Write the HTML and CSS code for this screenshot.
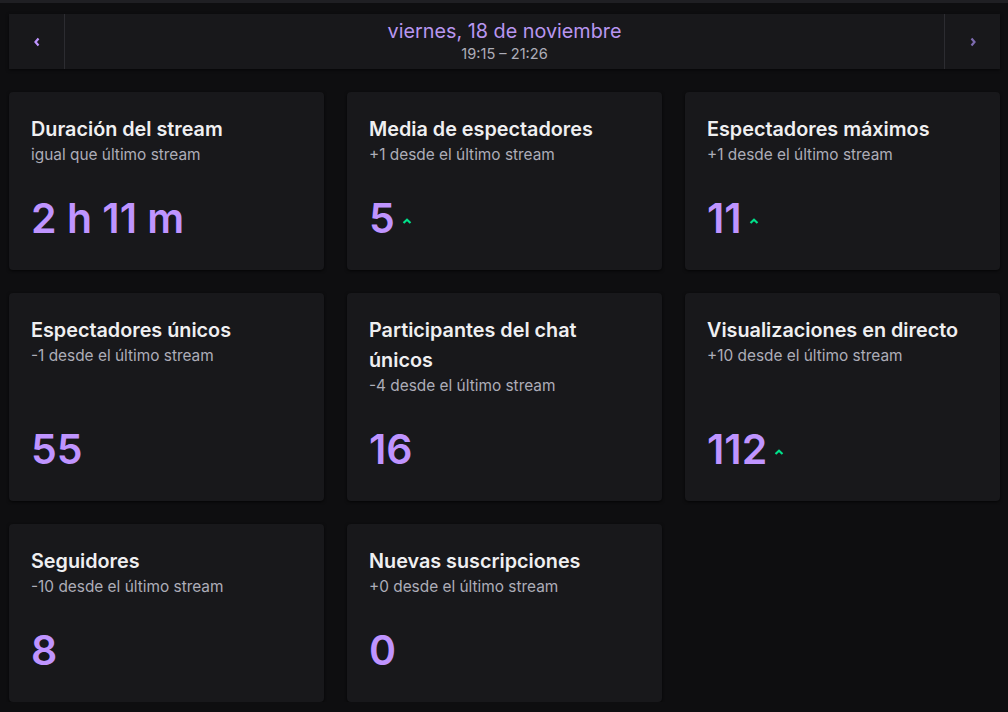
FILE: index.html
```html
<!DOCTYPE html>
<html lang="es">
<head>
<meta charset="utf-8">
<title>Resumen del stream</title>
<link rel="stylesheet" href="styles.css">
</head>
<body>
<div class="topstrip"></div>
<main class="page">
  <header class="datebar">
    <button class="nav nav-prev" aria-label="Anterior">
      <svg width="8" height="10" viewBox="0 0 8 10"><path d="M5.5 1.5 L2.5 5 L5.5 8.5" fill="none" stroke="currentColor" stroke-width="2.2" stroke-linejoin="miter"/></svg>
    </button>
    <div class="date">
      <div class="date-main">viernes, 18 de noviembre</div>
      <div class="date-time">19:15 – 21:26</div>
    </div>
    <button class="nav nav-next" aria-label="Siguiente">
      <svg width="8" height="10" viewBox="0 0 8 10"><path d="M2.5 1.5 L5.5 5 L2.5 8.5" fill="none" stroke="currentColor" stroke-width="2.2" stroke-linejoin="miter"/></svg>
    </button>
  </header>

  <section class="grid">
    <article class="card">
      <h2 class="title">Duración del stream</h2>
      <p class="sub">igual que último stream</p>
      <div class="value">2 h 11 m</div>
    </article>
    <article class="card">
      <h2 class="title">Media de espectadores</h2>
      <p class="sub">+1 desde el último stream</p>
      <div class="value">5<span class="up"><svg width="10" height="6" viewBox="0 0 10 6"><path d="M1.5 5 L5 1.8 L8.5 5" fill="none" stroke="currentColor" stroke-width="2.2"/></svg></span></div>
    </article>
    <article class="card">
      <h2 class="title">Espectadores máximos</h2>
      <p class="sub">+1 desde el último stream</p>
      <div class="value">11<span class="up"><svg width="10" height="6" viewBox="0 0 10 6"><path d="M1.5 5 L5 1.8 L8.5 5" fill="none" stroke="currentColor" stroke-width="2.2"/></svg></span></div>
    </article>

    <article class="card">
      <h2 class="title">Espectadores únicos</h2>
      <p class="sub">-1 desde el último stream</p>
      <div class="value">55</div>
    </article>
    <article class="card">
      <h2 class="title">Participantes del chat únicos</h2>
      <p class="sub">-4 desde el último stream</p>
      <div class="value">16</div>
    </article>
    <article class="card">
      <h2 class="title">Visualizaciones en directo</h2>
      <p class="sub">+10 desde el último stream</p>
      <div class="value">112<span class="up"><svg width="10" height="6" viewBox="0 0 10 6"><path d="M1.5 5 L5 1.8 L8.5 5" fill="none" stroke="currentColor" stroke-width="2.2"/></svg></span></div>
    </article>

    <article class="card">
      <h2 class="title">Seguidores</h2>
      <p class="sub">-10 desde el último stream</p>
      <div class="value">8</div>
    </article>
    <article class="card">
      <h2 class="title">Nuevas suscripciones</h2>
      <p class="sub">+0 desde el último stream</p>
      <div class="value">0</div>
    </article>
  </section>
</main>
</body>
</html>
```

FILE: styles.css
```css
html, body {
  margin: 0;
  padding: 0;
  background: #0e0e10;
  font-family: Inter, "Noto Sans", "Liberation Sans", sans-serif;
  color: #efeff1;
}

.topstrip {
  height: 3px;
  background: #1f1f23;
}

.page {
  padding: 11px 8px 0 9px;
  display: flex;
  flex-direction: column;
  gap: 23px;
}

.datebar {
  display: flex;
  align-items: stretch;
  height: 55px;
  background: #18181b;
  box-shadow: 0 1px 3px rgba(0, 0, 0, 0.6);
}

.nav {
  width: 56px;
  flex: none;
  border: 0;
  background: transparent;
  padding: 0;
  display: flex;
  align-items: center;
  justify-content: center;
  cursor: pointer;
}

.nav-prev {
  border-right: 1px solid #2c2c31;
  color: #bf94ff;
}

.nav-next {
  border-left: 1px solid #2c2c31;
  color: #7d6bb0;
}

.date {
  flex: 1;
  display: flex;
  flex-direction: column;
  align-items: center;
  justify-content: center;
}

.date-main {
  font-size: 19.8px;
  line-height: 24px;
  color: #b896f0;
}

.date-time {
  font-size: 14.6px;
  line-height: 22px;
  color: #adadb8;
}

.grid {
  display: grid;
  grid-template-columns: repeat(3, 1fr);
  gap: 23px;
}

.card {
  background: #18181b;
  border-radius: 4px;
  box-shadow: 0 1px 3px rgba(0, 0, 0, 0.7);
  padding: 22px 22px 27px;
  display: flex;
  flex-direction: column;
}

.title {
  margin: 0;
  font-size: 19.8px;
  line-height: 30px;
  font-weight: 600;
  color: #efeff1;
}

.sub {
  margin: 0 0 28px;
  font-size: 15.4px;
  line-height: 21px;
  color: #adadb8;
}

.value {
  margin-top: auto;
  font-size: 41px;
  line-height: 50px;
  font-weight: 600;
  color: #bf94ff;
  display: flex;
  align-items: center;
}

.up {
  color: #00e08a;
  display: inline-flex;
  margin-left: 7px;
  margin-top: 6px;
}
```
